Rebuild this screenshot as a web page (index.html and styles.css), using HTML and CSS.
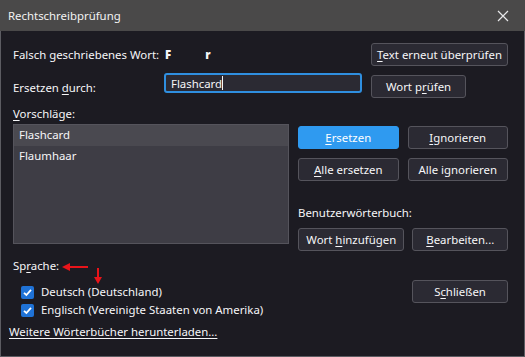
FILE: index.html
```html
<!DOCTYPE html>
<html lang="de">
<head>
    <meta charset="UTF-8">
    <title>Rechtschreibprüfung</title>
    <link rel="stylesheet" href="styles.css">
</head>
<body>
    <div class="window">
        <div class="titlebar">
            <span class="title">Rechtschreibprüfung</span>
            <svg class="close" width="12" height="12" viewBox="0 0 12 12">
                <path d="M1 1L11 11M11 1L1 11" stroke="#e8e8ea" stroke-width="1.2" fill="none"/>
            </svg>
        </div>
        <div class="content">
            <div class="row row-word">
                <span class="label">Falsch geschriebenes Wort:</span>
                <span class="word"><b>F</b><b class="gap">r</b></span>
                <button class="btn btn-wide"><u>T</u>ext erneut überprüfen</button>
            </div>
            <div class="row row-replace">
                <label class="label" for="replace">Ersetzen <u>d</u>urch:</label>
                <div class="input"><span>Flashcard</span><i class="caret"></i></div>
                <button class="btn btn-check">Wort p<u>r</u>üfen</button>
            </div>
            <div class="label heading"><u>V</u>orschläge:</div>
            <div class="main">
                <ul class="list">
                    <li class="selected">Flashcard</li>
                    <li>Flaumhaar</li>
                </ul>
                <div class="actions">
                    <div class="pair">
                        <button class="btn btn-primary"><u>E</u>rsetzen</button>
                        <button class="btn"><u>I</u>gnorieren</button>
                    </div>
                    <div class="pair">
                        <button class="btn"><u>A</u>lle ersetzen</button>
                        <button class="btn">Alle ignorieren</button>
                    </div>
                    <div class="label dict-label">Benutzerwörterbuch:</div>
                    <div class="pair pair-dict">
                        <button class="btn btn-add">Wort <u>h</u>inzufügen</button>
                        <button class="btn btn-edit"><u>B</u>earbeiten...</button>
                    </div>
                </div>
            </div>
            <div class="bottom">
                <div class="langs">
                    <div class="label lang-label">Sp<u>r</u>ache:</div>
                    <label class="check"><span class="box"></span>Deutsch (Deutschland)</label>
                    <label class="check"><span class="box"></span>Englisch (Vereinigte Staaten von Amerika)</label>
                    <svg class="arrow arrow-left" width="26" height="8" viewBox="0 0 26 8">
                        <path d="M0 4L8 0V3H26V5H8V8Z" fill="#e8141a"/>
                    </svg>
                    <svg class="arrow arrow-down" width="8" height="16" viewBox="0 0 8 16">
                        <path d="M3 0H5V9H8L4 16L0 9H3Z" fill="#e8141a"/>
                    </svg>
                </div>
                <button class="btn btn-close">S<u>c</u>hließen</button>
            </div>
            <a class="link" href="#">Weitere Wörterbücher herunterladen...</a>
        </div>
    </div>
</body>
</html>
```

FILE: styles.css
```css
body {
    margin: 0;
    background: #1c1b22;
    font-family: "Noto Sans", "Open Sans", sans-serif;
    font-size: 11.4px;
    color: #f6f6f8;
}
.window {
    width: 525px;
    height: 357px;
    box-sizing: border-box;
    border: 1px solid #5c5c62;
    border-top: none;
    background: #1c1b22;
}
.titlebar {
    height: 31px;
    background: #4a4949;
    display: flex;
    align-items: center;
    justify-content: space-between;
    padding: 0 16px 0 8px;
    margin: 0 -1px;
    font-size: 11.4px;
    color: #f2f2f2;
}
.close {
    display: block;
}
.content {
    padding: 12px 16px 0 12px;
    position: relative;
    white-space: nowrap;
}
.label {
    line-height: 16px;
}
u {
    text-decoration: underline;
    text-underline-offset: 2px;
}
.row {
    display: flex;
    align-items: flex-start;
}
.row-word {
    height: 23px;
    align-items: center;
}
.row-word .label {
    width: 152px;
}
.word {
    width: 206px;
    font-weight: bold;
}
.word .gap {
    margin-left: 34px;
}
.btn {
    font-family: inherit;
    font-size: 11.4px;
    color: #f6f6f8;
    background: #2b2a33;
    border: 1px solid #55545c;
    border-radius: 3px;
    height: 23px;
    padding: 0 4px;
    white-space: nowrap;
    cursor: pointer;
}
.btn-wide {
    width: 137px;
}
.row-replace {
    margin-top: 7px;
    height: 25px;
}
.row-replace .label {
    width: 151px;
    margin-top: 7px;
}
.input {
    width: 198px;
    height: 20px;
    box-sizing: border-box;
    border: 2px solid #2f8fe0;
    border-radius: 3px;
    background: #2b2a33;
    padding: 0 5px;
    display: flex;
    align-items: center;
}
.caret {
    display: inline-block;
    width: 1px;
    height: 14px;
    background: #f6f6f8;
}
.btn-check {
    width: 95px;
    margin-left: 9px;
    margin-top: 2px;
}
.heading {
    margin-top: 8px;
}
.main {
    display: flex;
    gap: 9px;
    margin-top: 2px;
}
.list {
    list-style: none;
    margin: 0;
    padding: 0;
    width: 277px;
    height: 120px;
    box-sizing: border-box;
    background: #3e3d45;
    border: 1px solid #55545c;
}
.list li {
    height: 21px;
    line-height: 20px;
    padding: 0 5px;
}
.list li.selected {
    background: #4a4950;
}
.actions {
    width: 210px;
    padding-top: 2px;
}
.pair {
    display: flex;
    gap: 9px;
    margin-bottom: 9px;
}
.pair .btn {
    width: 101px;
}
.btn-primary {
    background: #2f9af0;
    border-color: #2f9af0;
    color: #ffffff;
}
.dict-label {
    margin-top: 24px;
    margin-bottom: 7px;
}
.pair-dict {
    gap: 8px;
    margin-bottom: 0;
}
.pair-dict .btn-add {
    width: 107px;
}
.pair-dict .btn-edit {
    width: 96px;
}
.bottom {
    display: flex;
    justify-content: space-between;
    margin-top: 7px;
}
.langs {
    position: relative;
}
.lang-label {
    margin-bottom: 9px;
}
.check {
    display: flex;
    align-items: center;
    height: 18px;
    line-height: 16px;
    padding-left: 8px;
}
.box {
    width: 13px;
    height: 13px;
    border-radius: 2px;
    background: #1f72d6 url("data:image/svg+xml;utf8,<svg xmlns='http://www.w3.org/2000/svg' width='13' height='13'><path d='M3 6.8L5.4 9L10 3.8' stroke='white' stroke-width='1.8' fill='none'/></svg>");
    margin-right: 7px;
}
.arrow {
    position: absolute;
    display: block;
}
.arrow-left {
    left: 49px;
    top: 5px;
}
.arrow-down {
    left: 81px;
    top: 10px;
}
.btn-close {
    width: 96px;
    margin-top: 22px;
}
.link {
    display: block;
    margin: 5px 0 0 -4px;
    color: #f6f6f8;
    text-decoration: underline;
    text-underline-offset: 2px;
    line-height: 16px;
}
```
